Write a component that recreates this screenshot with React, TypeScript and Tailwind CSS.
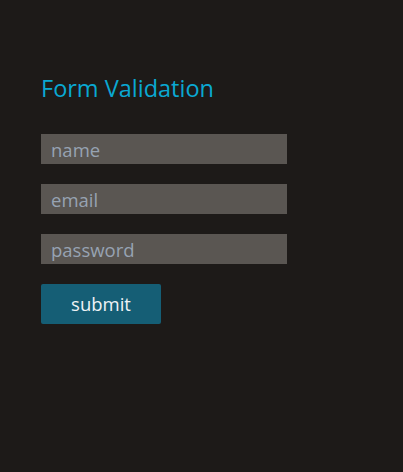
import React from "react";

const App = () => {
  const fields = [
    { name: "name", type: "text" },
    { name: "email", type: "email" },
    { name: "password", type: "password" },
  ];

  return (
    <div className="min-h-[472px] w-full bg-[#1d1a18] px-[41px] pt-[73px] font-['Open_Sans',sans-serif]">
      <h1 className="text-[23.5px] leading-[30px] text-[#0aa8d2]">Form Validation</h1>

      <form className="mt-[31px] flex flex-col gap-[20px]" onSubmit={(e) => e.preventDefault()}>
        {fields.map((f) => (
          <input
            key={f.name}
            type={f.type}
            placeholder={f.name}
            className="h-[30px] w-[246px] bg-[#5a5652] px-[10px] text-[18.5px] text-[#e5e7eb] outline-none placeholder:text-[#97a3b2]"
          />
        ))}
        <button
          type="submit"
          className="h-[40px] w-[120px] rounded-[2px] bg-[#155e75] text-[18.5px] text-[#eef2f5]"
        >
          submit
        </button>
      </form>
    </div>
  );
};

export default App;
